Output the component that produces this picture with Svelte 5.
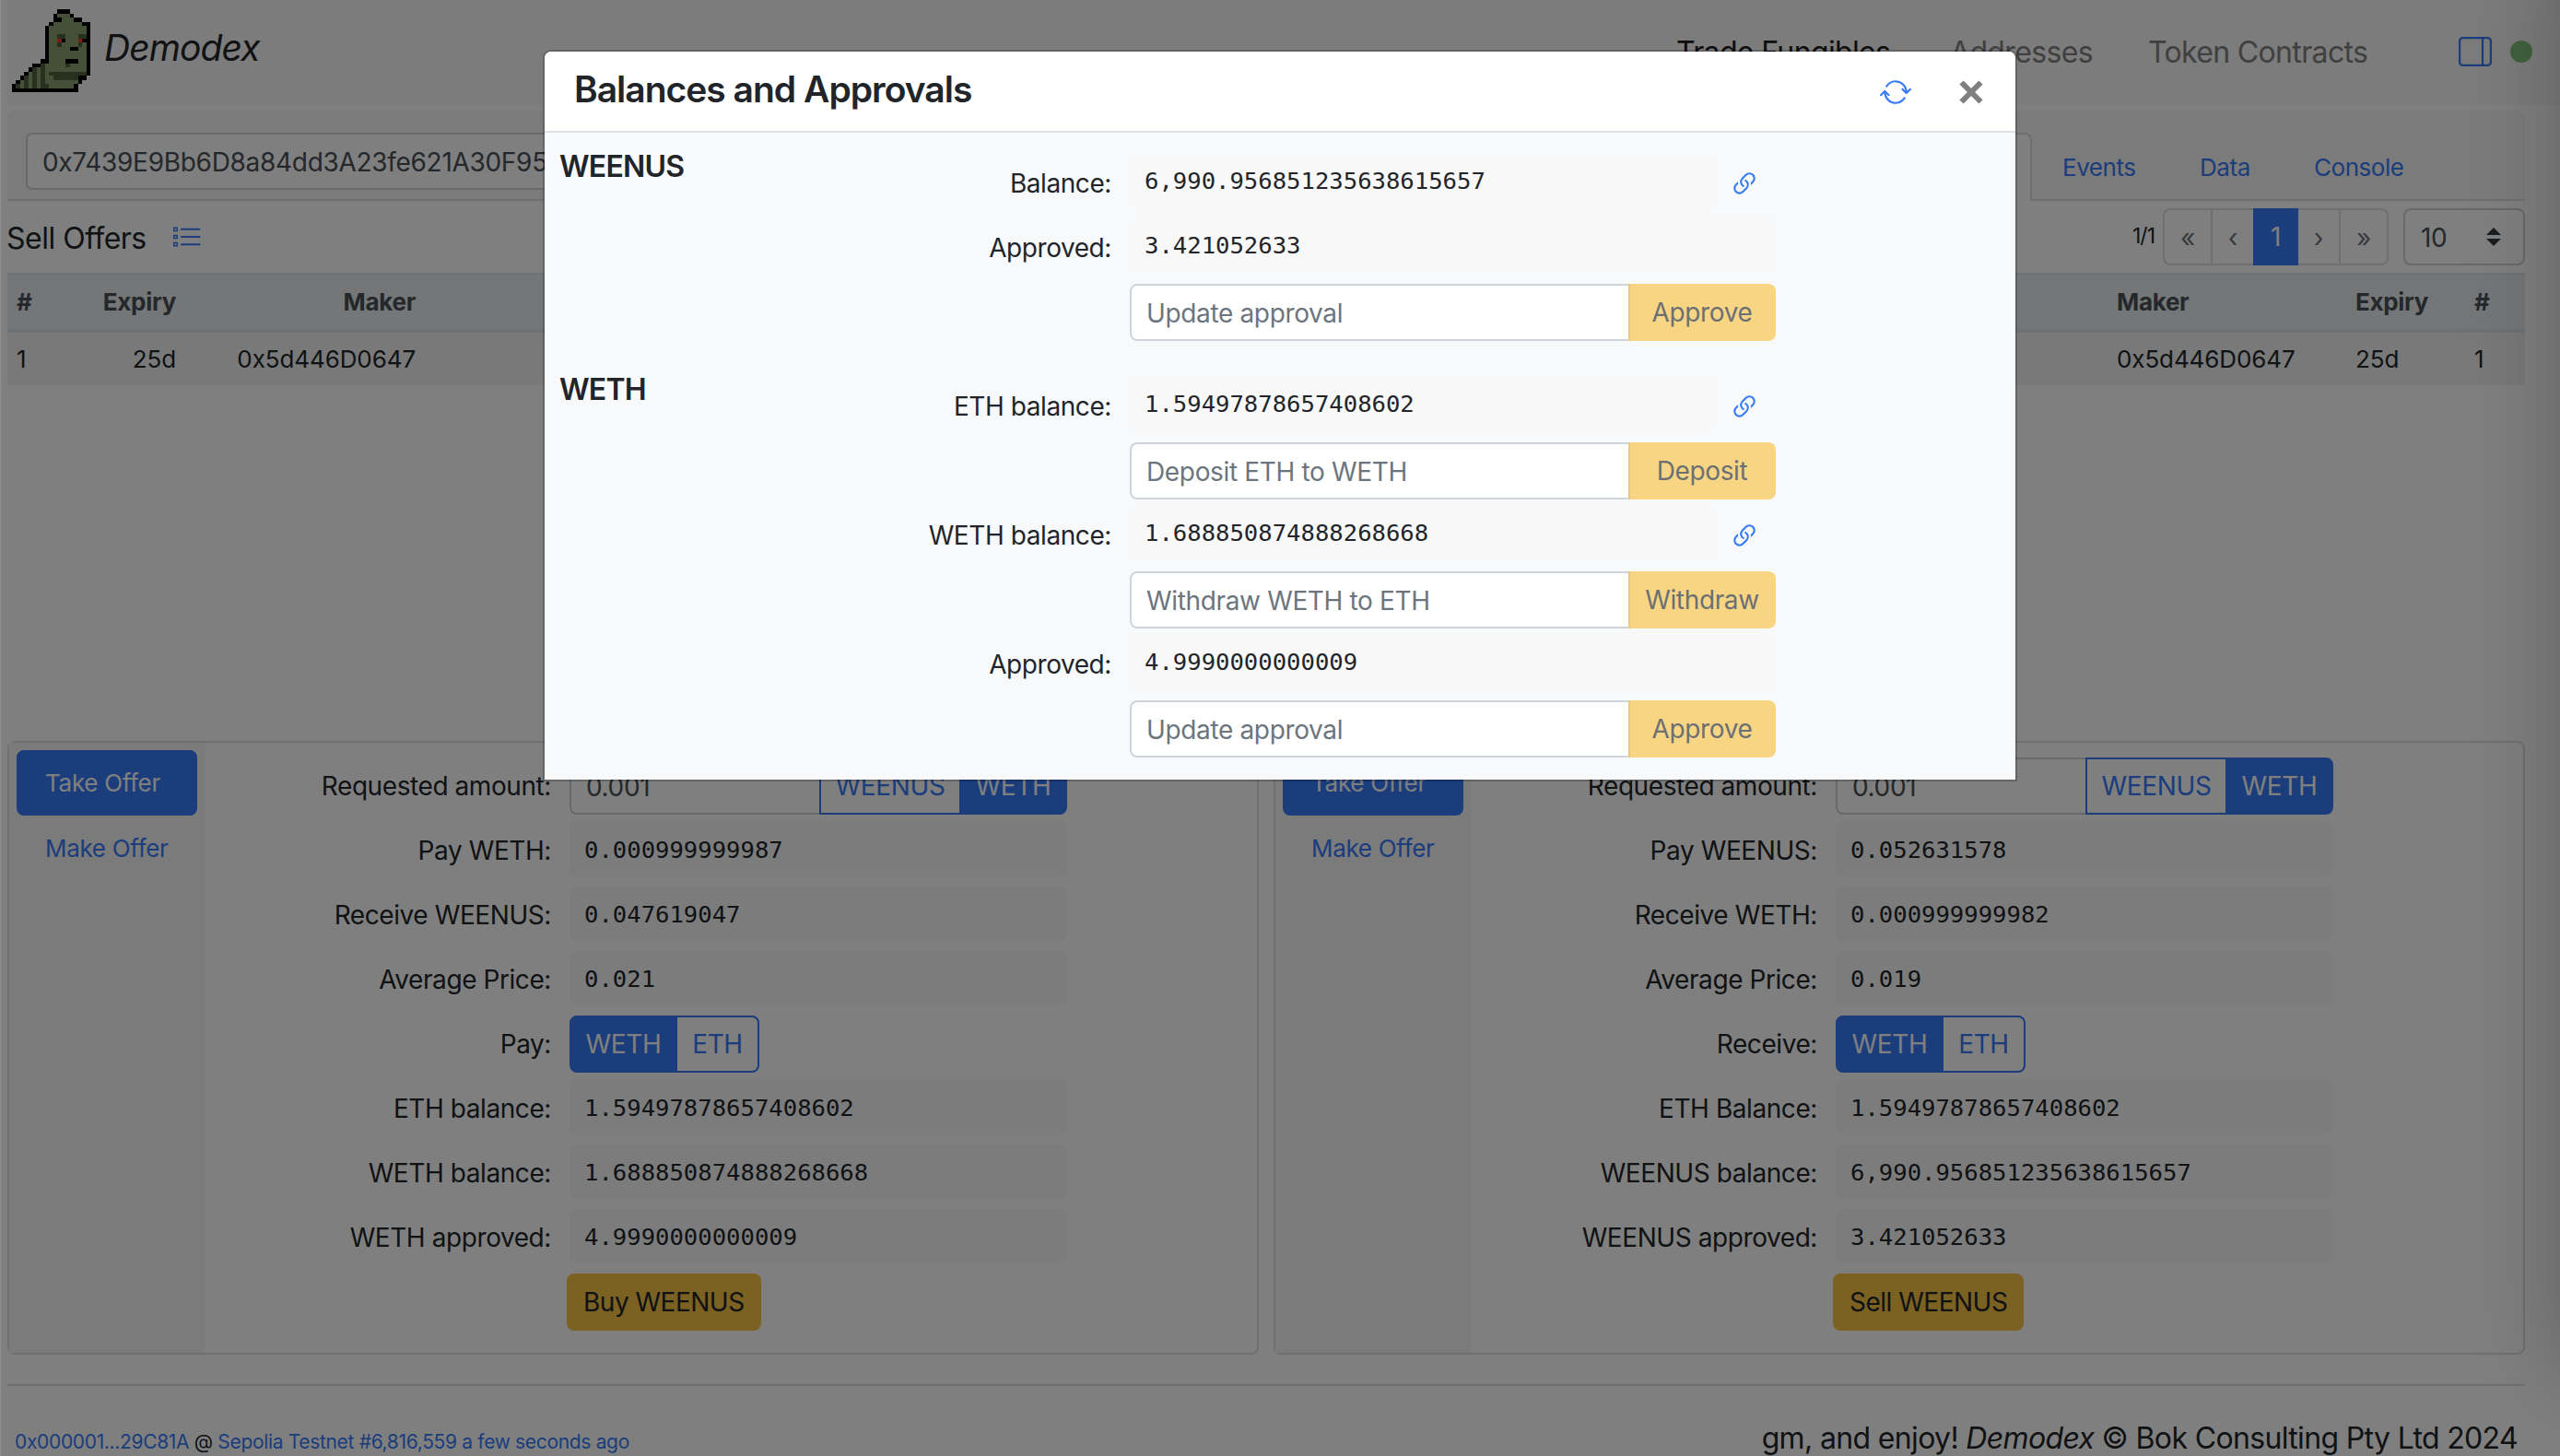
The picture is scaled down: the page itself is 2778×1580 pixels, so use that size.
<script>
  const leftOffer = {
    rows: [
      { label: 'Pay WETH:', value: '0.000999999987' },
      { label: 'Receive WEENUS:', value: '0.047619047' },
      { label: 'Average Price:', value: '0.021' },
      { label: 'Pay:', toggle: true },
      { label: 'ETH balance:', value: '1.59497878657408602' },
      { label: 'WETH balance:', value: '1.688850874888268668' },
      { label: 'WETH approved:', value: '4.9990000000009' }
    ],
    action: 'Buy WEENUS'
  };
  const rightOffer = {
    rows: [
      { label: 'Pay WEENUS:', value: '0.052631578' },
      { label: 'Receive WETH:', value: '0.000999999982' },
      { label: 'Average Price:', value: '0.019' },
      { label: 'Receive:', toggle: true },
      { label: 'ETH Balance:', value: '1.59497878657408602' },
      { label: 'WEENUS balance:', value: '6,990.956851235638615657' },
      { label: 'WEENUS approved:', value: '3.421052633' }
    ],
    action: 'Sell WEENUS'
  };
  const offers = [leftOffer, rightOffer];

  const groups = [
    {
      name: 'WEENUS',
      rows: [
        { label: 'Balance:', value: '6,990.956851235638615657', link: true },
        { label: 'Approved:', value: '3.421052633' },
        { placeholder: 'Update approval', button: 'Approve' }
      ]
    },
    {
      name: 'WETH',
      rows: [
        { label: 'ETH balance:', value: '1.59497878657408602', link: true },
        { placeholder: 'Deposit ETH to WETH', button: 'Deposit' },
        { label: 'WETH balance:', value: '1.688850874888268668', link: true },
        { placeholder: 'Withdraw WETH to ETH', button: 'Withdraw' },
        { label: 'Approved:', value: '4.9990000000009' },
        { placeholder: 'Update approval', button: 'Approve' }
      ]
    }
  ];

  // Mascot sprite: k outline, g body, d shade, r eye
  const sprite = [
    '...........kkk.....',
    '..........kgggk....',
    '..........kkgggkk..',
    '.........kgggggggkk',
    '........kgggggggggk',
    '........kgggggggggk',
    '........kggddgggddk',
    '........kggrkgggrkk',
    '........kggdggggdgk',
    '........kgggggkkggk',
    '........kgggggggggk',
    '........kgggggggggk',
    '.......kkggggkkkggk',
    '.....kkdgggggdggggk',
    '....kdgdggggggggggk',
    '...kgdgdgdddddddddk',
    '..kdgdgdggddddddkk.',
    '.kgdgdgdggggggggk..',
    'kdgdgdgddggggggk...',
    'kkkkkkkkkkkkkkkk...'
  ];
  const colors = { k: '#000000', g: '#88a070', d: '#506040', r: '#f83a28' };
  const cells = sprite.flatMap((line, y) =>
    [...line].map((c, x) => ({ c, x, y })).filter((p) => p.c !== '.')
  );
</script>

<div class="page">
  <nav class="navbar">
    <svg class="mascot" viewBox="0 0 19 20" preserveAspectRatio="none" shape-rendering="crispEdges">
      {#each cells as p}
        <rect x={p.x} y={p.y} width="1" height="1" fill={colors[p.c]} />
      {/each}
    </svg>
    <span class="brand">Demodex</span>
    <div class="menu">
      <span class="m1">Trade Fungibles</span>
      <span class="m2">Addresses</span>
      <span class="m3">Token Contracts</span>
    </div>
    <svg class="sidebar-icon" viewBox="0 0 36 32" fill="none" stroke="#367af6" stroke-width="2.2">
      <rect x="1.1" y="1.1" width="33.8" height="29.8" rx="3.5" />
      <path d="M26 1v30" />
    </svg>
    <span class="dot"></span>
  </nav>

  <div class="tabs">
    <div class="address">0x7439E9Bb6D8a84dd3A23fe621A30F95</div>
    <div class="active-tab"></div>
    <a class="t1" href="#events">Events</a>
    <a class="t2" href="#data">Data</a>
    <a class="t3" href="#console">Console</a>
  </div>

  <div class="toolbar">
    <span class="sell">Sell Offers</span>
    <svg class="list-icon" viewBox="0 0 30 22" fill="none" stroke="#367af6">
      <path stroke-width="1.5" d="M.8 1.2h3.4v3.2H.8zM.8 9.4h3.4v3.2H.8zM.8 17.6h3.4v3.2H.8z" />
      <path stroke-width="2.1" stroke-linecap="round" d="M9 2.8h19.500M9 11h19.500M9 19.200h19.500" />
    </svg>
    <span class="count">1/1</span>
    <div class="pager">
      <span class="p1">«</span><span class="p2">‹</span><span class="p3">1</span><span class="p4">›</span><span class="p5">»</span>
    </div>
    <div class="select">
      <span>10</span>
      <svg viewBox="0 0 16 20" fill="#343a40"><path d="M8 0l8 8H0zM8 20l8-8H0z" /></svg>
    </div>
  </div>

  <div class="tables">
    <div class="table sells">
      <div class="tr th"><span>#</span><span>Expiry</span><span>Maker</span></div>
      <div class="tr td"><span>1</span><span>25d</span><span>0x5d446D0647</span></div>
    </div>
    <div class="table buys">
      <div class="tr th"><span>Maker</span><span>Expiry</span><span>#</span></div>
      <div class="tr td"><span>0x5d446D0647</span><span>25d</span><span>1</span></div>
    </div>
  </div>

  <div class="cards">
    {#each offers as offer}
      <section class="card">
        <div class="side">
          <span class="pill on">Take Offer</span>
          <span class="pill">Make Offer</span>
        </div>
        <div class="form">
          <div class="row">
            <span class="label">Requested amount:</span>
            <div class="group wide">
              <span class="input">0.001</span>
              <span class="btn weenus">WEENUS</span>
              <span class="btn weth on">WETH</span>
            </div>
          </div>
          {#each offer.rows as r}
            <div class="row">
              <span class="label">{r.label}</span>
              {#if r.toggle}
                <div class="group">
                  <span class="btn weth first on">WETH</span>
                  <span class="btn eth">ETH</span>
                </div>
              {:else}
                <span class="plain">{r.value}</span>
              {/if}
            </div>
          {/each}
          <div class="row"><span class="label"></span><span class="warn">{offer.action}</span></div>
        </div>
      </section>
    {/each}
  </div>

  <footer>
    <span class="net"><a href="#account">0x000001...29C81A</a> @ <a href="#network">Sepolia Testnet</a> <a href="#block">#6,816,559 a few seconds ago</a></span>
    <span class="copy">gm, and enjoy! <i>Demodex</i> © Bok Consulting Pty Ltd 2024</span>
  </footer>

  <aside class="drawer"></aside>
  <div class="backdrop"></div>

  <div class="modal">
    <header>
      <h5>Balances and Approvals</h5>
      <svg class="refresh" viewBox="0 0 16 16" fill="#367af6">
        <path d="M2.854 7.146a.5.5 0 0 0-.708 0l-2 2a.5.5 0 1 0 .708.708L2.500 8.207l1.646 1.647a.5.5 0 0 0 .708-.708l-2-2zm13-1a.5.5 0 0 0-.708 0L13.500 7.793l-1.646-1.647a.5.5 0 0 0-.708.708l2 2a.5.5 0 0 0 .708 0l2-2a.5.5 0 0 0 0-.708z" />
        <path d="M8 3a4.995 4.995 0 0 0-4.192 2.273.5.5 0 0 1-.837-.546A6 6 0 0 1 14 8a.5.5 0 0 1-1 0 5 5 0 0 0-5-5zM2.500 7.500A.5.5 0 0 1 3 8a5 5 0 0 0 9.192 2.727.5.5 0 1 1 .837.546A6 6 0 0 1 2 8a.5.5 0 0 1 .5-.5z" />
      </svg>
      <svg class="close" viewBox="0 0 26 26" stroke="#7f7f7f" stroke-width="6"><path d="M2.500 2.500l21 21M23.500 2.500l-21 21" /></svg>
    </header>
    <div class="body">
      {#each groups as g}
        <div class="token">
          <h6>{g.name}</h6>
          <div class="lines">
            {#each g.rows as r}
              <div class="line">
                {#if r.button}
                  <span class="input">{r.placeholder}</span>
                  <span class="submit">{r.button}</span>
                {:else}
                  <span class="label">{r.label}</span>
                  <span class="plain" class:narrow={r.link}>{r.value}</span>
                  {#if r.link}
                    <svg class="link" viewBox="0 0 16 16" fill="#367af6">
                      <path d="M4.715 6.542L3.343 7.914a3 3 0 1 0 4.243 4.243l1.828-1.829A3 3 0 0 0 8.586 5.500L8 6.086a1 1 0 0 0-.154.199 2 2 0 0 1 .861 3.337L6.880 11.450a2 2 0 1 1-2.830-2.830l.793-.792a4.018 4.018 0 0 1-.128-1.287z" />
                      <path d="M6.586 4.672A3 3 0 0 0 7.414 9.500l.775-.776a2 2 0 0 1-.896-3.346L9.120 3.550a2 2 0 0 1 2.830 2.830l-.793.792c.112.420.155.855.128 1.287l1.372-1.372a3 3 0 0 0-4.243-4.243L6.586 4.672z" />
                    </svg>
                  {/if}
                {/if}
              </div>
            {/each}
          </div>
        </div>
      {/each}
    </div>
  </div>
</div>

<style>
  :global(body) { margin: 0; background: #fff; }
  .page, .page * { box-sizing: border-box; }
  .page {
    position: relative;
    width: 2778px;
    height: 1580px;
    overflow: hidden;
    background: #fff;
    color: #212529;
    font-family: Inter, "Liberation Sans", sans-serif;
    font-size: 28px;
    letter-spacing: -0.35px;
    white-space: nowrap;
  }
  a { color: #367af6; text-decoration: none; }

  .navbar {
    display: flex;
    height: 114px;
    margin-left: 8px;
    padding-left: 5px;
    background: #f8f8f8;
  }
  .mascot { width: 85px; height: 90px; margin-top: 10px; }
  .brand { width: 181px; margin-left: 15px; line-height: 104px; font-size: 39px; font-style: italic; letter-spacing: -0.9px; }
  .menu { display: flex; width: 849px; margin-left: 1525px; font-size: 32px; line-height: 113px; letter-spacing: -0.65px; color: #808080; }
  .m1 { width: 297px; color: #1a1a1a; }
  .m2 { width: 215px; }
  .sidebar-icon { width: 36px; height: 32px; margin-top: 40px; }
  .dot { width: 24px; height: 24px; margin: 44px 0 0 20px; border-radius: 50%; background: #7fc27b; }

  .tabs {
    display: flex;
    width: 2732px;
    height: 98px;
    margin: 6px 0 0 8px;
    padding: 24px 0 0 20px;
    background: #f7f7f7;
    border-bottom: 2px solid #dfdfdf;
    border-radius: 8px 8px 0 0;
    font-size: 26px;
    line-height: 76px;
    letter-spacing: -0.45px;
  }
  .address {
    width: 580px;
    height: 62px;
    padding-left: 16px;
    border: 2px solid #ced4da;
    border-radius: 7px;
    background: #fff;
    color: #495057;
    font-size: 28px;
    line-height: 61px;
    letter-spacing: -0.3px;
  }
  .active-tab {
    width: 277px;
    height: 74px;
    margin: 0 33px 0 1320px;
    background: #fff;
    border: 2px solid #dfdfdf;
    border-bottom: 0;
    border-radius: 8px 8px 0 0;
  }
  .t1 { width: 149px; }
  .t2 { width: 124px; }

  .toolbar { display: flex; height: 78px; width: 2740px; padding: 8px 0 0 7px; }
  .sell { width: 181px; font-size: 32px; line-height: 65px; letter-spacing: -0.5px; }
  .list-icon { width: 30px; height: 22px; margin-top: 20px; }
  .count { width: 35px; margin-left: 2096px; margin-right: -2px; font-size: 23px; line-height: 60px; letter-spacing: -1px; }
  .pager {
    display: flex;
    width: 245px;
    height: 62px;
    border: 2px solid #dfdfdf;
    border-radius: 8px;
    line-height: 60px;
    text-align: center;
    color: #6c757d;
  }
  .p1 { width: 52px; border-right: 2px solid #dfdfdf; }
  .p2 { width: 44px; }
  .p3 { width: 49px; height: 62px; margin-top: -2px; padding-top: 1px; background: #367af6; color: #fff; }
  .p4 { width: 46px; border-right: 2px solid #dfdfdf; }
  .p5 { width: 50px; }
  .select {
    display: flex;
    width: 132px;
    height: 62px;
    margin-left: 16px;
    padding-left: 17px;
    border: 2px solid #ced4da;
    border-radius: 8px;
    line-height: 60px;
    color: #495057;
  }
  .select span { width: 71px; }
  .select svg { width: 16px; height: 20px; margin-top: 19px; }

  .tables { display: flex; margin-left: 8px; height: 508px; }
  .table { width: 1358px; font-size: 26px; letter-spacing: -0.1px; }
  .buys { margin-left: 16px; }
  .tr { display: grid; }
  .th {
    height: 65px;
    background: #e9ecef;
    border-top: 2px solid #dee2e6;
    border-bottom: 4px solid #dee2e6;
    line-height: 59px;
    font-weight: 700;
    color: #495057;
    letter-spacing: -0.3px;
  }
  .td { height: 57px; background: #f2f2f2; line-height: 58px; }
  .sells .tr { grid-template-columns: 60px 123px 260px; padding-left: 0; }
  .sells .tr span { text-align: right; }
  .sells .tr span:first-child { text-align: left; padding-left: 10px; }
  .buys .tr { grid-template-columns: 259px 129px 55px; padding-left: 915px; }

  .cards { display: flex; gap: 16px; margin-left: 8px; }
  .card { display: flex; width: 1358px; height: 666px; border: 2px solid #dfdfdf; border-radius: 8px; background: #fff; }
  .side { width: 212px; padding: 8px; background: #f7f7f7; font-size: 26px; letter-spacing: -0.3px; }
  .pill { display: block; height: 71px; padding-left: 31px; border-radius: 8px; line-height: 71px; color: #367af6; }
  .pill.on { background: #367af6; color: #fff; }
  .form { display: flex; flex-direction: column; gap: 8px; padding-top: 16px; }
  .row { display: flex; height: 62px; }
  .row .label { width: 376px; margin-right: 20px; }
  .label { line-height: 62px; text-align: right; letter-spacing: -0.42px; }
  .plain {
    width: 540px;
    height: 59px;
    padding-left: 16px;
    border-radius: 8px;
    background: #f8f8f8;
    font-family: "DejaVu Sans Mono", monospace;
    font-size: 25.6px;
    line-height: 60px;
    letter-spacing: 0;
  }
  .group { display: flex; height: 62px; line-height: 60px; }
  .wide { width: 540px; }
  .group .input { width: 271px; padding-left: 16px; border: 2px solid #ced4da; border-right: 0; border-radius: 8px 0 0 8px; color: #495057; background: #fff; }
  .btn { border: 2px solid #367af6; color: #367af6; text-align: center; line-height: 59px; }
  .btn.on { background: #367af6; color: #fff; }
  .weenus { width: 152px; border-right: 0; }
  .weth { width: 117px; border-radius: 0 8px 8px 0; }
  .weth.first { border-radius: 8px 0 0 8px; }
  .eth { width: 89px; border-left: 0; border-radius: 0 8px 8px 0; }
  .warn { height: 62px; margin-left: -3px; padding: 0 18px; border-radius: 8px; background: #f7c244; line-height: 63px; letter-spacing: -0.5px; }

  footer {
    display: flex;
    justify-content: space-between;
    width: 2732px;
    height: 110px;
    margin: 32px 0 0 8px;
    padding: 0 8px;
    border-top: 2px solid #dfdfdf;
  }
  .net { font-size: 21px; line-height: 122px; letter-spacing: -0.33px; }
  .copy { font-size: 32px; line-height: 114px; letter-spacing: -0.65px; }

  .drawer { position: absolute; left: 2778px; top: -100px; width: 640px; height: 1560px; box-shadow: 0 32px 96px rgba(0, 0, 0, 0.25); }
  .backdrop { position: absolute; inset: 0; background: rgba(0, 0, 0, 0.5); box-shadow: inset 1px 0 rgba(255, 255, 255, 0.12); }

  .modal {
    position: absolute;
    left: 589px;
    top: 54px;
    width: 1600px;
    height: 794px;
    border: 2px solid rgba(0, 0, 0, 0.2);
    border-radius: 9px 9px 0 0;
    background: #f8f9fb;
    background-clip: padding-box;
  }
  .modal header {
    display: flex;
    height: 88px;
    padding-left: 32px;
    border-bottom: 2px solid #dee2e6;
    border-radius: 7px 7px 0 0;
    background: #fff;
  }
  h5, h6 { margin: 0; font-weight: 560; }
  h5 { width: 1417px; font-size: 39px; line-height: 82px; letter-spacing: -1px; }
  .refresh { width: 34px; height: 34px; margin-top: 27px; }
  .close { width: 26px; height: 26px; margin: 31px 0 0 52px; }
  .body { display: flex; flex-direction: column; gap: 40px; padding: 24px 16px 0; }
  .token { display: flex; }
  h6 { width: 241px; margin-top: -7px; font-size: 32px; line-height: 39px; letter-spacing: -0.8px; }
  .lines { display: flex; flex-direction: column; gap: 8px; }
  .line { display: flex; height: 62px; width: 1079px; justify-content: flex-end; }
  .line .label { flex: 1; margin-right: 20px; }
  .line .plain { width: 701px; margin-top: -1px; line-height: 59px; }
  .line .narrow { width: 634px; }
  .link { width: 34px; height: 34px; margin: 15px 17px 0 16px; }
  .line .input { width: 541px; padding-left: 16px; border: 2px solid #ced4da; border-right: 0; border-radius: 8px 0 0 8px; background: #fff; color: #6c757d; line-height: 60px; }
  .submit { width: 160px; padding-right: 2px; border-left: 2px solid #e6c87f; border-radius: 0 8px 8px 0; background: #f7d583; color: #6c7074; text-align: center; line-height: 62px; }
</style>
